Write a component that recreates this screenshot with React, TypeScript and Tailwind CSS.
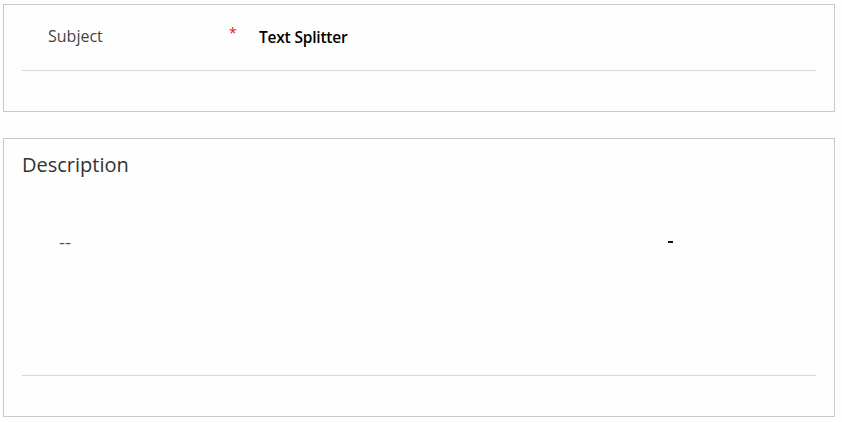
export default function App() {
  return (
    <div
      className="min-h-[422px] w-[842px] bg-[#fefefe] pl-[3px] pt-[4px]"
      style={{ fontFamily: '"Open Sans", "Noto Sans", sans-serif' }}
    >
      {/* Subject card */}
      <div className="flex h-[108px] w-[832px] flex-col border border-[#c8c8c8] px-[18px]">
        <div className="flex h-[66px] items-center border-b border-[#d8d8d8]">
          <div className="mb-[3px] w-[207px] pl-[26px] text-[16px] text-[#444]">Subject</div>
          <div className="mb-[10px] w-[30px] text-[14px] leading-none text-[#e0162b]">*</div>
          <div className="text-[15.5px] font-semibold tracking-[-0.2px] text-black">Text Splitter</div>
        </div>
      </div>

      {/* Description card */}
      <div className="mt-[26px] flex h-[279px] w-[832px] flex-col border border-[#c8c8c8] px-[18px]">
        <div className="pt-[12px] text-[20px] leading-[28px] text-[#333]">Description</div>
        <div className="flex h-[197px] flex-col border-b border-[#d8d8d8]">
          <div className="mt-[53px] flex items-center">
            <div className="w-[646px] pl-[37px] text-[19px] leading-[20px] text-[#555]">--</div>
            <div className="h-[2px] w-[5px] bg-[#1a0a30]" />
          </div>
        </div>
      </div>
    </div>
  );
}
